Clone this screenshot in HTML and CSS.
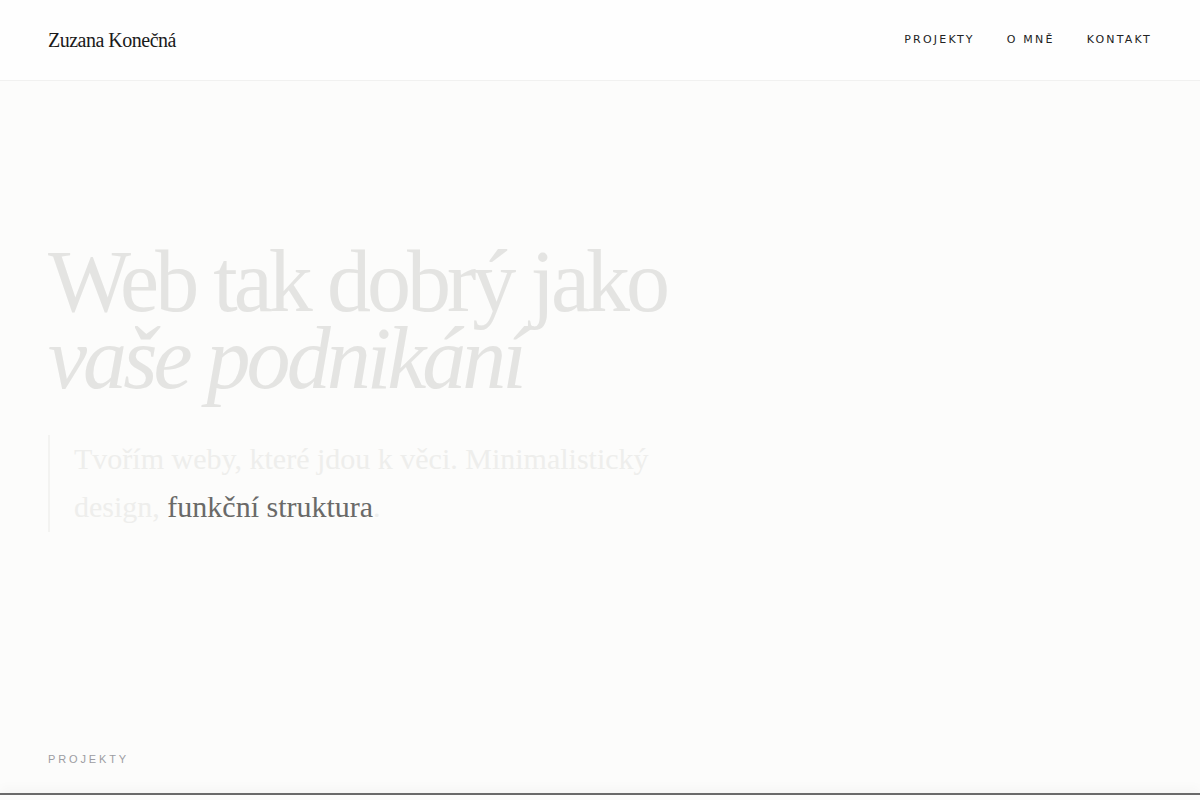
FILE: index.html
```html
<!DOCTYPE html>
<html lang="cs">
<head>
<meta charset="utf-8">
<title>Zuzana Konečná</title>
<link rel="stylesheet" href="styles.css">
</head>
<body>
<header class="site-header">
  <a class="logo" href="#">Zuzana Konečná</a>
  <nav class="nav">
    <a href="#">Projekty</a>
    <a href="#">O mně</a>
    <a href="#">Kontakt</a>
  </nav>
</header>
<main>
  <section class="hero">
    <h1 class="hero-title">Web tak dobrý jako<br><em>vaše podnikání</em></h1>
    <p class="hero-lead">Tvořím weby, které jdou k věci. Minimalistický design, <span class="hl">funkční struktura</span>.</p>
  </section>
  <section class="projects">
    <div class="section-label">Projekty</div>
    <div class="project-card"></div>
  </section>
</main>
</body>
</html>
```
FILE: styles.css
```css
* { box-sizing: border-box; }
html, body { margin: 0; padding: 0; }
body {
  background: #fcfcfb;
  font-family: "Liberation Serif", "Times New Roman", serif;
  color: #1a1a1a;
  overflow: hidden;
  height: 800px;
}
a { text-decoration: none; color: inherit; }

.site-header {
  height: 81px;
  padding: 0 48px;
  display: flex;
  align-items: center;
  justify-content: space-between;
  background: #fefefe;
  border-bottom: 1px solid #f1f1f0;
}
.logo {
  font-size: 20px;
  letter-spacing: -0.5px;
  color: #1a1a1a;
}
.nav {
  display: flex;
  gap: 32px;
  padding-bottom: 2px;
}
.nav a {
  font-family: "DejaVu Sans", Verdana, sans-serif;
  font-size: 11px;
  letter-spacing: 0.2em;
  text-transform: uppercase;
  color: #222;
}

.hero {
  padding: 162px 48px 0;
  height: 614px;
}
.hero-title {
  margin: 0;
  font-weight: 400;
  font-size: 88px;
  line-height: 0.88;
  letter-spacing: -0.045em;
  color: #e4e4e2;
}
.hero-title em { font-style: italic; }
.hero-lead {
  margin: 37px 0 0;
  max-width: 640px;
  border-left: 2px solid #f3f3f1;
  padding-left: 24px;
  font-size: 30px;
  line-height: 1.62;
  color: #eeeeec;
}
.hero-lead .hl { color: #6a6a68; }

.projects {
  padding: 57px 0 0;
}
.section-label {
  padding: 0 48px;
  font-family: "Liberation Sans", Arial, sans-serif;
  font-size: 11px;
  letter-spacing: 0.26em;
  text-transform: uppercase;
  color: #9c9ca2;
  line-height: 14px;
}
.project-card {
  margin-top: 27px;
  height: 40px;
  border-top: 2px solid #6a6a6a;
  box-shadow: 0 -6px 10px rgba(0, 0, 0, 0.025);
  background: #fcfcfb;
}
```
